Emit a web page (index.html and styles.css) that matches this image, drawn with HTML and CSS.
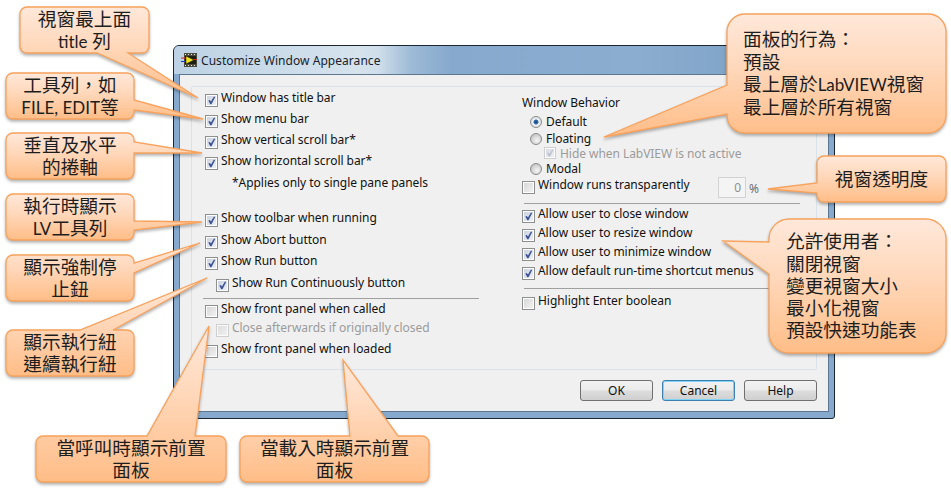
FILE: index.html
```html
<!DOCTYPE html>
<html lang="zh-Hant">
<head>
    <meta charset="UTF-8">
    <title>Customize Window Appearance</title>
    <link rel="stylesheet" href="styles.css">
</head>
<body>
    <svg class="defs" width="0" height="0">
        <defs>
            <symbol id="tick" viewBox="0 0 13 13">
                <path d="M2.800 6.600 L4.500 5.800 L5.900 7.800 L9.200 2.200 L11 2.200 L6.500 11 L5 11 Z"/>
            </symbol>
            <linearGradient id="fill" x1="0" y1="0" x2="0" y2="1">
                <stop offset="0" stop-color="#ffe8da"/>
                <stop offset="0.45" stop-color="#ffd7b9"/>
                <stop offset="1" stop-color="#ffbd87"/>
            </linearGradient>
        </defs>
    </svg>

    <div class="window">
        <div class="titlebar">
            <svg class="app-icon" width="16" height="14" viewBox="0 0 16 14">
                <rect x="3" y="0" width="13" height="14" fill="#4b4b3f"/>
                <path d="M4 1h1v1H4zM7 1h1v1H7zM10 1h1v1h-1zM13 1h1v1h-1zM4 12h1v1H4zM7 12h1v1H7zM10 12h1v1h-1zM13 12h1v1h-1z" fill="#e8e8e0"/>
                <rect x="4" y="3" width="11" height="8" fill="#1c1f12"/>
                <path d="M5 3 L13 7 L5 11 Z" fill="#f3e81e" stroke="#111" stroke-width=".5"/>
                <path d="M0 5H5" stroke="#e01b1b"/>
                <path d="M0 8.500H5" stroke="#2233cc"/>
                <path d="M12 6.500H16" stroke="#e01b1b"/>
            </svg>
            <span class="title">Customize Window Appearance</span>
        </div>
        <div class="client">
            <div class="group">
                <div class="col-left">
                    <label class="opt"><span class="check on"><svg><use href="#tick"/></svg></span>Window has title bar</label>
                    <label class="opt"><span class="check on"><svg><use href="#tick"/></svg></span>Show menu bar</label>
                    <label class="opt"><span class="check on"><svg><use href="#tick"/></svg></span>Show vertical scroll bar*</label>
                    <label class="opt"><span class="check on"><svg><use href="#tick"/></svg></span>Show horizontal scroll bar*</label>
                    <p class="note">*Applies only to single pane panels</p>
                    <label class="opt row-22"><span class="check on"><svg><use href="#tick"/></svg></span>Show toolbar when running</label>
                    <label class="opt"><span class="check on"><svg><use href="#tick"/></svg></span>Show Abort button</label>
                    <label class="opt row-22"><span class="check on"><svg><use href="#tick"/></svg></span>Show Run button</label>
                    <label class="opt sub row-22"><span class="check on"><svg><use href="#tick"/></svg></span>Show Run Continuously button</label>
                    <hr class="sep sep-left">
                    <label class="opt row-19"><span class="check"></span>Show front panel when called</label>
                    <label class="opt sub off"><span class="check"></span>Close afterwards if originally closed</label>
                    <label class="opt"><span class="check"></span>Show front panel when loaded</label>
                </div>
                <div class="col-right">
                    <div class="heading">Window Behavior</div>
                    <label class="radio-row"><span class="radio on"></span>Default</label>
                    <label class="radio-row floating"><span class="radio"></span>Floating</label>
                    <label class="hide-row off"><span class="check on"><svg><use href="#tick"/></svg></span>Hide when LabVIEW is not active</label>
                    <label class="radio-row modal"><span class="radio"></span>Modal</label>
                    <div class="trans-row">
                        <label class="opt trans-label"><span class="check"></span>Window runs transparently</label>
                        <span class="num">0</span>
                        <span class="pct">%</span>
                    </div>
                    <hr class="sep sep-right">
                    <label class="opt allow"><span class="check on"><svg><use href="#tick"/></svg></span>Allow user to close window</label>
                    <label class="opt allow"><span class="check on"><svg><use href="#tick"/></svg></span>Allow user to resize window</label>
                    <label class="opt allow"><span class="check on"><svg><use href="#tick"/></svg></span>Allow user to minimize window</label>
                    <label class="opt allow"><span class="check on"><svg><use href="#tick"/></svg></span>Allow default run-time shortcut menus</label>
                    <hr class="sep sep-right sep-last">
                    <label class="opt"><span class="check"></span>Highlight Enter boolean</label>
                </div>
            </div>
            <div class="buttons">
                <button class="btn">OK</button>
                <button class="btn focus">Cancel</button>
                <button class="btn">Help</button>
            </div>
        </div>
    </div>

    <!-- callout shapes, tails run over the dialog -->
    <svg class="shapes" width="951" height="499" viewBox="0 0 951 499">
        <path d="M27 7H142A7 7 0 0 1 149 14V46A7 7 0 0 1 142 53H128L198 98L97 53H27A7 7 0 0 1 20 46V14A7 7 0 0 1 27 7Z"/>
        <path d="M13 73H127A7 7 0 0 1 134 80V100L203 119L134 110V112A7 7 0 0 1 127 119H13A7 7 0 0 1 6 112V80A7 7 0 0 1 13 73Z"/>
        <path d="M13 133H127A7 7 0 0 1 134 140V142L202 153L134 153V172A7 7 0 0 1 127 179H13A7 7 0 0 1 6 172V140A7 7 0 0 1 13 133Z"/>
        <path d="M13 194H127A7 7 0 0 1 134 201V221L202 222L134 230V233A7 7 0 0 1 127 240H13A7 7 0 0 1 6 233V201A7 7 0 0 1 13 194Z"/>
        <path d="M13 255H127A7 7 0 0 1 134 262V263L200 243L134 273V294A7 7 0 0 1 127 301H13A7 7 0 0 1 6 294V262A7 7 0 0 1 13 255Z"/>
        <path d="M13 330H80L207 278L113 330H127A7 7 0 0 1 134 337V369A7 7 0 0 1 127 376H13A7 7 0 0 1 6 369V337A7 7 0 0 1 13 330Z"/>
        <path d="M43 436H147L209 326L195 436H219A7 7 0 0 1 226 443V475A7 7 0 0 1 219 482H43A7 7 0 0 1 36 475V443A7 7 0 0 1 43 436Z"/>
        <path d="M247 436H350L343 360L398 436H422A7 7 0 0 1 429 443V475A7 7 0 0 1 422 482H247A7 7 0 0 1 240 475V443A7 7 0 0 1 247 436Z"/>
        <path d="M745 14H928A18 18 0 0 1 946 32V115A18 18 0 0 1 928 133H745A18 18 0 0 1 727 115V114L604 137L727 85V32A18 18 0 0 1 745 14Z"/>
        <path d="M824 156H939A7 7 0 0 1 946 163V195A7 7 0 0 1 939 202H824A7 7 0 0 1 817 195V193L768 189L817 183V163A7 7 0 0 1 824 156Z"/>
        <path d="M789 219H926A20 20 0 0 1 946 239V333A20 20 0 0 1 926 353H789A20 20 0 0 1 769 333V274L723 241L769 242V239A20 20 0 0 1 789 219Z"/>
    </svg>

    <div class="callout c1"><div>視窗最上面</div><div><span class="lat">title</span> 列</div></div>
    <div class="callout c2"><div>工具列&#xFF0C;如</div><div><span class="lat">FILE, EDIT</span>等</div></div>
    <div class="callout c3"><div>垂直及水平</div><div>的捲軸</div></div>
    <div class="callout c4"><div>執行時顯示</div><div><span class="lat">LV</span>工具列</div></div>
    <div class="callout c5"><div>顯示強制停</div><div>止鈕</div></div>
    <div class="callout c6"><div>顯示執行紐</div><div>連續執行紐</div></div>
    <div class="callout c7"><div>當呼叫時顯示前置</div><div>面板</div></div>
    <div class="callout c8"><div>當載入時顯示前置</div><div>面板</div></div>
    <div class="callout c9 left"><div>面板的行為&#xFF1A;</div><div>預設</div><div>最上層於<span class="lat">LabVIEW</span>視窗</div><div>最上層於所有視窗</div></div>
    <div class="callout c10"><div>視窗透明度</div></div>
    <div class="callout c11 left"><div>允許使用者&#xFF1A;</div><div>關閉視窗</div><div>變更視窗大小</div><div>最小化視窗</div><div>預設快速功能表</div></div>
</body>
</html>
```

FILE: styles.css
```css
html, body { margin: 0; padding: 0; }
body {
    position: relative;
    width: 951px;
    height: 499px;
    overflow: hidden;
    background: #fff;
    font-family: "Noto Sans", "Open Sans", sans-serif;
    font-size: 12px;
    color: #111;
}
.defs { position: absolute; }

/* dialog */
.window {
    position: absolute;
    left: 173px;
    top: 45px;
    width: 660px;
    height: 372px;
    border: 1px solid #1c2630;
    border-radius: 6px 6px 3px 3px;
    background: #86a9cd;
    display: flex;
    flex-direction: column;
}
.titlebar {
    height: 28px;
    display: flex;
    align-items: center;
    padding: 0 0 0 7px;
    border-radius: 5px 5px 0 0;
    background:
        linear-gradient(100deg, transparent 88%, #aec7df 92%, #a9c3dc 100%),
        linear-gradient(90deg, #bcd2e4 0, #d6e3ed 28%, #cfdeea 31%, #9dbad6 36%, #86a9cd 42%, #8aadd0 70%, #7fa3c6 88%);
}
.app-icon { margin-right: 4px; }
.title { letter-spacing: 0.05px; color: #18222c; }
.client {
    flex: 1;
    margin: 0 5px 6px 5px;
    border: 1px solid #5d7791;
    background: #f0f0f0;
    display: flex;
    flex-direction: column;
    padding: 11px 11px 0 11px;
    letter-spacing: -0.05px;
}
.group {
    height: 282px;
    border: 1px solid #d9e2e9;
    border-radius: 2px;
    display: flex;
}
.col-left { width: 318px; padding: 3px 0 0 13px; box-sizing: border-box; }
.col-right { flex: 1; padding: 8px 0 0 12px; }

.opt {
    display: flex;
    height: 21px;
    line-height: 16px;
    white-space: nowrap;
}
.row-22 { height: 22px; }
.row-19 { height: 19px; }
.sub { padding-left: 11px; }
.off { color: #9b9b9b; }
.note { margin: 1px 0 0 27px; height: 35px; line-height: 16px; }
.sep { border: 0; border-top: 1px solid #a0a0a0; margin: 0; }
.sep-left { width: 276px; margin: 1px 0 2px -2px; }
.sep-right { width: 276px; margin: 0 0 2px 2px; }
.sep-last { margin: 6px 0 4px 2px; }

.check {
    box-sizing: border-box;
    flex: none;
    width: 13px;
    height: 13px;
    margin: 4px 3px 0 0;
    border: 1px solid #8e8f8f;
    background: linear-gradient(135deg, #d5d5d5 0, #f4f4f4 100%);
    box-shadow: inset 0 0 0 1px #fff;
}
.check.on { background: linear-gradient(135deg, #c9d0de 0, #f0f2f7 100%); }
.check svg { display: block; width: 11px; height: 11px; fill: #3c5293; }
.off .check { border-color: #c4c4c4; opacity: .75; }
.off .check svg { fill: #a9b1bf; }

.heading { line-height: 16px; height: 19px; }
.radio-row { display: flex; height: 17px; line-height: 16px; padding-left: 8px; align-items: flex-start; }
.radio-row.floating { height: 16px; }
.radio-row.modal { height: 15px; line-height: 15px; }
.radio {
    box-sizing: border-box;
    flex: none;
    width: 12px;
    height: 12px;
    margin: 2px 4px 0 0;
    border: 1px solid #8b8b8b;
    border-radius: 50%;
    background: radial-gradient(circle at 60% 65%, #f6f6f6 0, #c4c4c4 80%);
}
.radio.on { background: radial-gradient(circle, #16396e 0, #3f78b8 32%, #eef2f6 40%, #cfcfcf 100%); }
.hide-row { display: flex; height: 14px; line-height: 14px; padding-left: 22px; }
.hide-row .check { margin: 0 4px 0 0; width: 12px; height: 12px; }
.hide-row .check svg { width: 10px; height: 10px; }
.trans-row { display: flex; height: 27px; }
.trans-label { width: 196px; line-height: 18px; }
.trans-label .check { margin-top: 5px; }
.num {
    box-sizing: border-box;
    width: 28px;
    height: 21px;
    margin-top: 1px;
    padding-right: 4px;
    border: 1px solid #d2d2d2;
    background: #f4f4f4;
    color: #8f8f8f;
    line-height: 19px;
    text-align: right;
}
.pct { margin: 5px 0 0 3px; line-height: 16px; color: #6d6d6d; }
.allow { height: 19px; }

.buttons { display: flex; justify-content: flex-end; gap: 9px; margin: 10px 0 0 0; }
.btn {
    box-sizing: border-box;
    width: 73px;
    height: 21px;
    padding: 0;
    border: 1px solid #707070;
    border-radius: 3px;
    background: linear-gradient(#f2f2f2 0, #ebebeb 48%, #dddddd 52%, #cfcfcf 100%);
    font: inherit;
    color: #111;
    line-height: 18px;
}
.btn.focus { border-color: #3c7fb1; box-shadow: inset 0 0 0 1px #7fd3f5; }

/* callouts */
.shapes { position: absolute; left: 0; top: 0; filter: drop-shadow(0 2px 1.500px rgba(0, 0, 0, .3)); }
.shapes path { fill: url(#fill); stroke: #f8a25c; stroke-width: 1.300; }
.callout {
    position: absolute;
    display: flex;
    flex-direction: column;
    justify-content: center;
    text-align: center;
    font-family: "Lato", "Noto Sans CJK TC", sans-serif;
    font-size: 18.660px;
    line-height: 22px;
    color: #1d1d1d;
    white-space: nowrap;
}
.callout.left { text-align: left; line-height: 22.300px; }
.lat { font-size: 17px; }
.c1 { left: 20px; top: 7px; width: 129px; height: 46px; }
.c2 { left: 6px; top: 73px; width: 128px; height: 46px; }
.c3 { left: 6px; top: 133px; width: 128px; height: 46px; }
.c4 { left: 6px; top: 194px; width: 128px; height: 46px; }
.c5 { left: 6px; top: 255px; width: 128px; height: 46px; }
.c6 { left: 6px; top: 330px; width: 128px; height: 46px; }
.c7 { left: 36px; top: 436px; width: 190px; height: 46px; }
.c8 { left: 240px; top: 436px; width: 189px; height: 46px; }
.c9 { left: 743px; top: 14px; width: 203px; height: 119px; }
.c10 { left: 817px; top: 156px; width: 129px; height: 46px; }
.c11 { left: 786px; top: 219px; width: 160px; height: 134px; }
```
